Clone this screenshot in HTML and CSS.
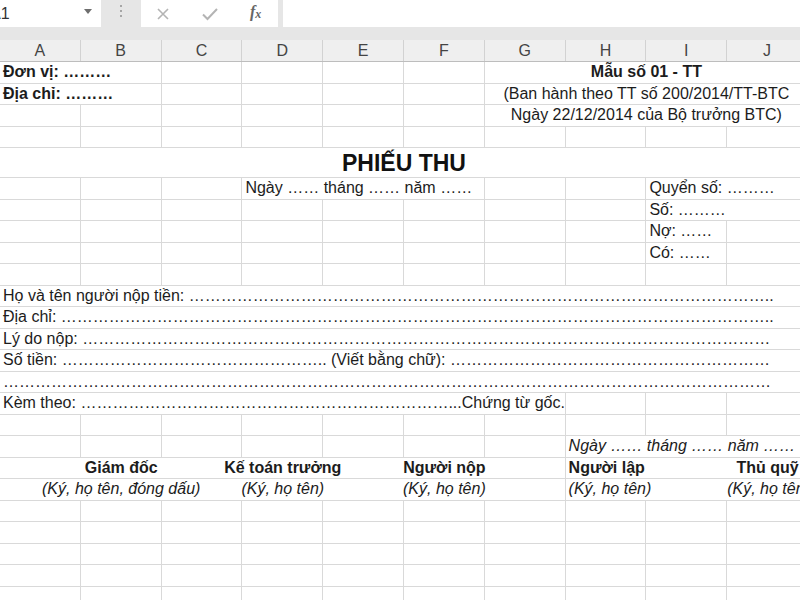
FILE: index.html
```html
<!DOCTYPE html>
<html lang="vi">
<head>
<meta charset="utf-8">
<title>Phiếu thu</title>
<link rel="stylesheet" href="styles.css">
</head>
<body>
<div class="topbar">
  <div class="namebox"><span class="namebox-text">A1</span><span class="caret"></span></div>
  <div class="grip"><span></span><span></span><span></span></div>
  <div class="fbuttons">
    <svg class="ico" width="14" height="14" viewBox="0 0 14 14"><path d="M2 2 L12 12 M12 2 L2 12" stroke="#b4b4b4" stroke-width="1.6" fill="none"/></svg>
    <svg class="ico" width="18" height="14" viewBox="0 0 18 14"><path d="M2 7.5 L6.5 12 L16 2" stroke="#b4b4b4" stroke-width="2" fill="none"/></svg>
    <span class="fx">f<span class="fx-x">x</span></span>
  </div>
  <div class="finput"></div>
</div>
<div class="topgap"></div>
<div class="colheads">
  <div class="h">A</div><div class="h">B</div><div class="h">C</div><div class="h">D</div><div class="h">E</div>
  <div class="h">F</div><div class="h">G</div><div class="h">H</div><div class="h">I</div><div class="h">J</div>
</div>

<div class="sheet">
  <div class="row">
    <div class="c s2 b">Đơn vị: ………</div><div class="c"></div><div class="c"></div><div class="c"></div><div class="c"></div>
    <div class="c s4 b center nb">Mẫu số 01 - TT</div>
  </div>
  <div class="row">
    <div class="c s2 b">Địa chỉ: ………</div><div class="c"></div><div class="c"></div><div class="c"></div><div class="c"></div>
    <div class="c s4 center nb">(Ban hành theo TT số 200/2014/TT-BTC</div>
  </div>
  <div class="row">
    <div class="c"></div><div class="c"></div><div class="c"></div><div class="c"></div><div class="c"></div><div class="c"></div>
    <div class="c s4 center nb">Ngày 22/12/2014 của Bộ trưởng BTC)</div>
  </div>
  <div class="row">
    <div class="c"></div><div class="c"></div><div class="c"></div><div class="c"></div><div class="c"></div>
    <div class="c"></div><div class="c"></div><div class="c"></div><div class="c"></div><div class="c"></div>
  </div>
  <div class="row title-row">
    <div class="c s10 center nb title">PHIẾU THU</div>
  </div>
  <div class="row">
    <div class="c"></div><div class="c"></div><div class="c"></div>
    <div class="c s3">Ngày …… tháng …… năm ……</div>
    <div class="c"></div><div class="c"></div>
    <div class="c s2">Quyển số: ………</div>
  </div>
  <div class="row">
    <div class="c"></div><div class="c"></div><div class="c"></div><div class="c"></div><div class="c"></div>
    <div class="c"></div><div class="c"></div><div class="c"></div>
    <div class="c s2">Số: ………</div>
  </div>
  <div class="row">
    <div class="c"></div><div class="c"></div><div class="c"></div><div class="c"></div><div class="c"></div>
    <div class="c"></div><div class="c"></div><div class="c"></div>
    <div class="c">Nợ: ……</div><div class="c"></div>
  </div>
  <div class="row">
    <div class="c"></div><div class="c"></div><div class="c"></div><div class="c"></div><div class="c"></div>
    <div class="c"></div><div class="c"></div><div class="c"></div>
    <div class="c">Có: ……</div><div class="c"></div>
  </div>
  <div class="row">
    <div class="c"></div><div class="c"></div><div class="c"></div><div class="c"></div><div class="c"></div>
    <div class="c"></div><div class="c"></div><div class="c"></div><div class="c"></div><div class="c"></div>
  </div>
  <div class="row">
    <div class="c s10 nb">Họ và tên người nộp tiền: …………<!---->…………<!---->…………<!---->…………<!---->…………<!---->…………<!---->…………<!---->…………<!---->…………<!---->..</div>
  </div>
  <div class="row">
    <div class="c s10 nb">Địa chỉ: …………<!---->…………<!---->…………<!---->…………<!---->…………<!---->…………<!---->…………<!---->…………<!---->…………<!---->…………<!---->…………<!---->..</div>
  </div>
  <div class="row">
    <div class="c s10 nb">Lý do nộp: …………<!---->…………<!---->…………<!---->…………<!---->…………<!---->…………<!---->…………<!---->…………<!---->…………<!---->…………<!---->………</div>
  </div>
  <div class="row">
    <div class="c s10 nb">Số tiền: …………<!---->…………<!---->…………<!---->…………<!---->.. (Viết bằng chữ): …………<!---->…………<!---->…………<!---->…………<!---->…………</div>
  </div>
  <div class="row">
    <div class="c s10 nb">…………<!---->…………<!---->…………<!---->…………<!---->…………<!---->…………<!---->…………<!---->…………<!---->…………<!---->…………<!---->…………<!---->…………</div>
  </div>
  <div class="row">
    <div class="c s7">Kèm theo: …………<!---->…………<!---->…………<!---->…………<!---->…………<!---->………<!---->...Chứng từ gốc.</div>
    <div class="c"></div><div class="c"></div><div class="c"></div>
  </div>
  <div class="row">
    <div class="c"></div><div class="c"></div><div class="c"></div><div class="c"></div><div class="c"></div>
    <div class="c"></div><div class="c"></div><div class="c"></div><div class="c"></div><div class="c"></div>
  </div>
  <div class="row">
    <div class="c"></div><div class="c"></div><div class="c"></div><div class="c"></div><div class="c"></div>
    <div class="c"></div><div class="c"></div>
    <div class="c s3 i nb">Ngày …… tháng …… năm ……</div>
  </div>
  <div class="row sign">
    <div class="c s7 cell-ag"></div><div class="c s3 nb cell-hj"></div>
    <div class="t t-ac b">Giám đốc</div>
    <div class="t t-ce b">Kế toán trưởng</div>
    <div class="t t-eg b">Người nộp</div>
    <div class="t t-h b">Người lập</div>
    <div class="t t-j b">Thủ quỹ</div>
  </div>
  <div class="row sign">
    <div class="c s7 cell-ag"></div><div class="c s3 nb cell-hj"></div>
    <div class="t t-ac i">(Ký, họ tên, đóng dấu)</div>
    <div class="t t-ce i">(Ký, họ tên)</div>
    <div class="t t-eg i">(Ký, họ tên)</div>
    <div class="t t-h i">(Ký, họ tên)</div>
    <div class="t t-j i">(Ký, họ tên)</div>
  </div>
  <div class="row">
    <div class="c"></div><div class="c"></div><div class="c"></div><div class="c"></div><div class="c"></div>
    <div class="c"></div><div class="c"></div><div class="c"></div><div class="c"></div><div class="c"></div>
  </div>
  <div class="row">
    <div class="c"></div><div class="c"></div><div class="c"></div><div class="c"></div><div class="c"></div>
    <div class="c"></div><div class="c"></div><div class="c"></div><div class="c"></div><div class="c"></div>
  </div>
  <div class="row">
    <div class="c"></div><div class="c"></div><div class="c"></div><div class="c"></div><div class="c"></div>
    <div class="c"></div><div class="c"></div><div class="c"></div><div class="c"></div><div class="c"></div>
  </div>
  <div class="row">
    <div class="c"></div><div class="c"></div><div class="c"></div><div class="c"></div><div class="c"></div>
    <div class="c"></div><div class="c"></div><div class="c"></div><div class="c"></div><div class="c"></div>
  </div>
  <div class="row">
    <div class="c"></div><div class="c"></div><div class="c"></div><div class="c"></div><div class="c"></div>
    <div class="c"></div><div class="c"></div><div class="c"></div><div class="c"></div><div class="c"></div>
  </div>
</div>
</body>
</html>
```

FILE: styles.css
```css
html, body {
  margin: 0;
  padding: 0;
}
body {
  width: 800px;
  height: 600px;
  overflow: hidden;
  background: #ffffff;
  font-family: "Liberation Sans", Arial, sans-serif;
  color: #1c1c1c;
}

/* formula bar */
.topbar {
  display: flex;
  height: 28px;
  background: #e6e6e6;
}
.namebox {
  width: 111px;
  margin-left: -10px;
  height: 27px;
  background: #ffffff;
  display: flex;
  align-items: center;
  justify-content: space-between;
  padding: 0 9px 0 0;
  box-sizing: border-box;
  font-size: 16px;
  color: #333;
}
.caret {
  width: 0;
  height: 0;
  border-left: 4px solid transparent;
  border-right: 4px solid transparent;
  border-top: 5px solid #6e6e6e;
  margin-top: -4px;
}
.grip {
  width: 40px;
  display: flex;
  flex-direction: column;
  align-items: center;
  justify-content: center;
  gap: 3px;
  padding-bottom: 6px;
  box-sizing: border-box;
}
.grip span {
  width: 2px;
  height: 2px;
  background: #a6a6a6;
}
.fbuttons {
  width: 137px;
  height: 27px;
  background: #ffffff;
  display: flex;
  align-items: center;
  padding-left: 15px;
  box-sizing: border-box;
}
.ico {
  display: block;
}
.fbuttons .ico:first-child {
  margin-right: 31px;
}
.fbuttons .ico:nth-child(2) {
  margin-right: 31px;
}
.fx {
  font-family: "Liberation Serif", "Times New Roman", serif;
  font-style: italic;
  font-weight: bold;
  font-size: 16px;
  color: #666;
  margin-top: -3px;
}
.fx-x {
  font-size: 12px;
  position: relative;
  top: 1px;
}
.finput {
  flex: 1;
  margin-left: 5px;
  height: 27px;
  background: #ffffff;
}
.topgap {
  height: 12px;
  background: #e6e6e6;
}

/* column headings */
.colheads {
  display: grid;
  grid-template-columns: repeat(10, 80.8px);
  height: 22px;
  background: #efefef;
  border-bottom: 1px solid #bdbdbd;
  box-sizing: border-box;
}
.h {
  border-right: 1px solid #d2d2d2;
  text-align: center;
  font-size: 16px;
  line-height: 21px;
  color: #444;
}

/* sheet */
.row {
  display: grid;
  grid-template-columns: repeat(10, 80.8px);
  grid-template-rows: 1fr;
  height: 21.5px;
  border-bottom: 1px solid #d9d9d9;
  box-sizing: border-box;
}
.title-row {
  height: 30px;
}
.c {
  grid-row: 1;
  border-right: 1px solid #d9d9d9;
  padding-left: 3px;
  white-space: nowrap;
  font-size: 16px;
  line-height: 20px;
  overflow: visible;
}
.nb { border-right: none; }
.s2 { grid-column: span 2; }
.s3 { grid-column: span 3; }
.s4 { grid-column: span 4; }
.s7 { grid-column: span 7; }
.s10 { grid-column: span 10; }
.center { text-align: center; padding-left: 0; }
.b { font-weight: bold; }
.i { font-style: italic; }
.title {
  font-size: 23px;
  font-weight: bold;
  line-height: 30px;
  color: #111;
}

/* signature rows: labels overlap the cells they overflow */
.cell-ag { grid-column: 1 / 8; }
.cell-hj { grid-column: 8 / 11; }
.t {
  grid-row: 1;
  white-space: nowrap;
  font-size: 16px;
  line-height: 20px;
}
.t-ac { grid-column: 1 / 4; text-align: center; }
.t-ce { grid-column: 3 / 6; text-align: center; }
.t-eg { grid-column: 5 / 8; text-align: center; }
.t-h { grid-column: 8 / 9; padding-left: 3px; }
.t-j { grid-column: 10 / 11; text-align: center; }
```
